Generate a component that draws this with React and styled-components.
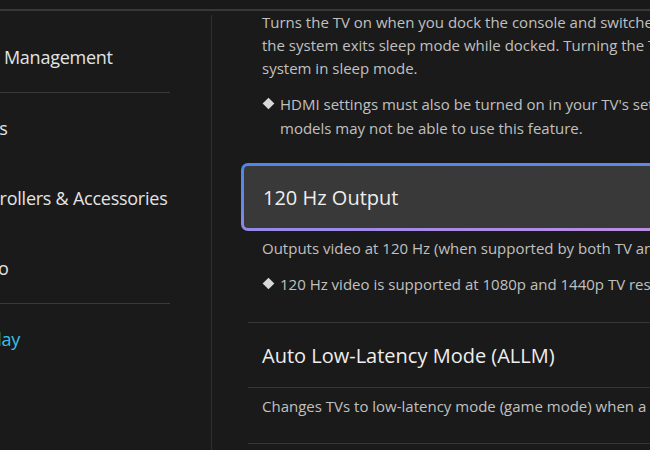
import React from 'react'
import styled, { createGlobalStyle } from 'styled-components'

const GlobalStyle = createGlobalStyle`
  html, body {
    margin: 0;
    padding: 0;
    background: #1a1a1a;
    overflow: hidden;
  }
  body {
    font-family: "Open Sans", "Noto Sans", sans-serif;
    -webkit-font-smoothing: antialiased;
  }
`

const navItems = [
  { label: 'Data Management' },
  { label: 'Users', divider: true },
  { label: 'Controllers & Accessories' },
  { label: 'Audio' },
  { label: 'Display', divider: true, active: true },
]

function App() {
  return (
    <>
      <GlobalStyle />
      <Screen>
        <TopBar />
        <Body>
          <Sidebar>
            {navItems.map(item => (
              <React.Fragment key={item.label}>
                {item.divider && <NavDivider />}
                <NavItem $active={item.active}>{item.label}</NavItem>
              </React.Fragment>
            ))}
          </Sidebar>

          <Content>
            <Description>
              <Line>Turns the TV on when you dock the console and switches the input when</Line>
              <Line>the system exits sleep mode while docked. Turning the TV off will put the</Line>
              <Line>system in sleep mode.</Line>
            </Description>
            <Note>
              <Line>HDMI settings must also be turned on in your TV's settings. Some TV</Line>
              <Line>models may not be able to use this feature.</Line>
            </Note>

            <OptionCard>120 Hz Output</OptionCard>
            <Description $gap={6}>
              <Line>Outputs video at 120 Hz (when supported by both TV and game).</Line>
            </Description>
            <Note>
              <Line>120 Hz video is supported at 1080p and 1440p TV resolutions.</Line>
            </Note>

            <Rule $gap={26} />
            <OptionRow>Auto Low-Latency Mode (ALLM)</OptionRow>
            <Rule />
            <Description $gap={7}>
              <Line>Changes TVs to low-latency mode (game mode) when a game is running.</Line>
            </Description>
            <Rule $gap={25} />
          </Content>
        </Body>
      </Screen>
    </>
  )
}

const Screen = styled.div`
  width: 650px;
  height: 450px;
  display: flex;
  flex-direction: column;
  overflow: hidden;
  background: #1a1a1a;
`

const TopBar = styled.header`
  height: 9px;
  flex-shrink: 0;
  border-bottom: 2px solid #383838;
  background: #191919;
`

const Body = styled.div`
  display: flex;
  flex: 1;
  min-height: 0;
`

const Sidebar = styled.nav`
  width: 250px;
  flex-shrink: 0;
  margin-left: -39px;
  margin-top: 4px;
  padding-top: 7px;
  border-right: 1px solid #303030;
`

const NavItem = styled.div`
  height: 70px;
  display: flex;
  align-items: center;
  font-size: 18px;
  letter-spacing: -0.25px;
  white-space: nowrap;
  color: ${p => (p.$active ? '#3bbfe6' : '#e3e3e3')};
`

const NavDivider = styled.hr`
  width: 209px;
  height: 1px;
  margin: 0;
  border: none;
  background: #3a3a3a;
`

const Content = styled.main`
  flex: 1;
  min-width: 0;
  padding-left: 50px;
`

const Line = styled.div`
  white-space: nowrap;
`

const Description = styled.div`
  margin-top: ${p => p.$gap ?? 0}px;
  font-size: 15px;
  line-height: 23px;
  color: #c0c0c0;
`

const Note = styled.div`
  position: relative;
  margin-top: 12px;
  padding-left: 18px;
  font-size: 15px;
  line-height: 24px;
  color: #c0c0c0;

  &::before {
    content: '';
    position: absolute;
    left: 2px;
    top: 7px;
    width: 9px;
    height: 9px;
    background: #d8d8d8;
    transform: rotate(45deg) scale(0.92);
  }
`

const OptionCard = styled.div`
  margin: 23px 0 0 -21px;
  width: 520px;
  height: 62px;
  display: flex;
  align-items: center;
  padding-left: 19px;
  font-size: 20px;
  color: #eeeeee;
  border: 3px solid transparent;
  border-radius: 7px;
  background:
    linear-gradient(#393939, #393939) padding-box,
    linear-gradient(176deg, #4d86ea 0%, #6688e8 40%, #a98ae8 75%, #c990de 100%) border-box;
`

const OptionRow = styled.div`
  height: 64px;
  display: flex;
  align-items: center;
  font-size: 20px;
  color: #eeeeee;
`

const Rule = styled.hr`
  margin: ${p => p.$gap ?? 0}px 0 0 -14px;
  height: 1px;
  border: none;
  background: #363636;
`

export default App
